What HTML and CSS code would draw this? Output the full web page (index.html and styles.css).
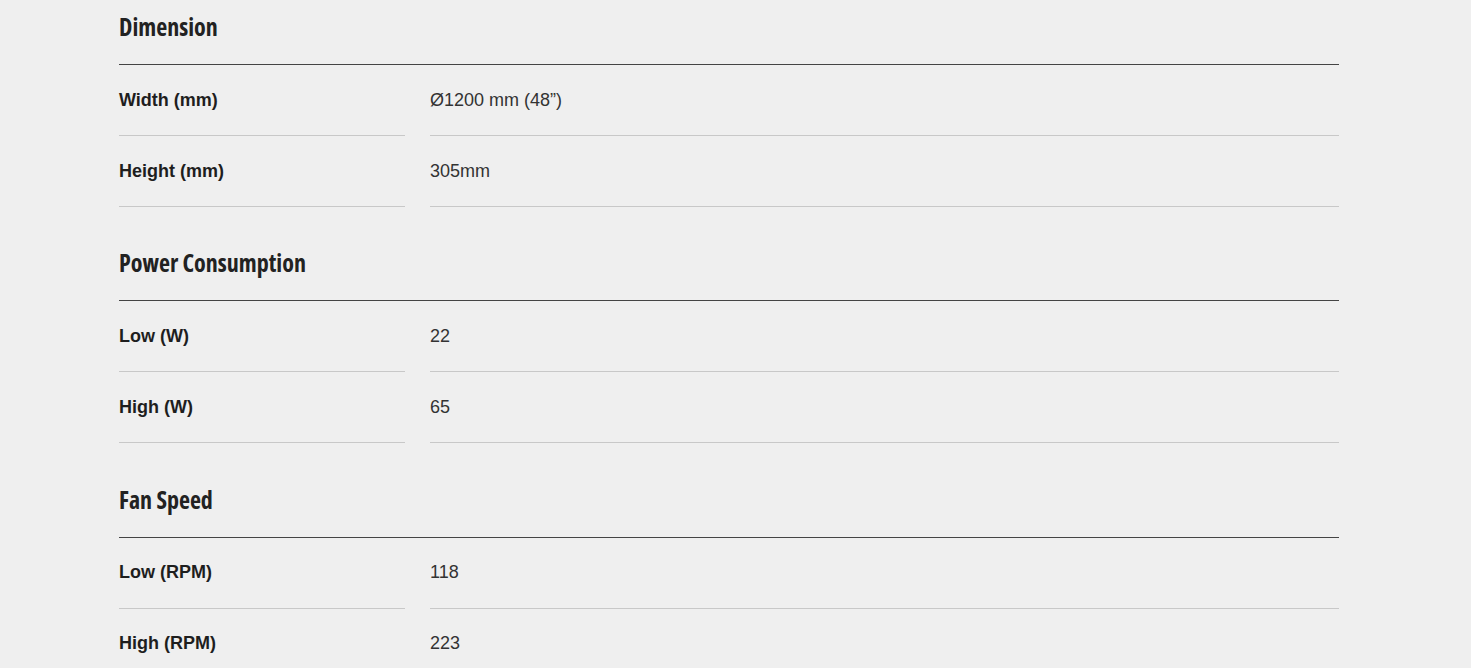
FILE: index.html
```html
<!DOCTYPE html>
<html lang="en">
<head>
<meta charset="utf-8">
<title>Specifications</title>
<link rel="stylesheet" href="styles.css">
</head>
<body>
<main class="specs">
  <section class="spec-group">
    <h2 class="spec-title">Dimension</h2>
    <div class="spec-rows">
      <div class="spec-label">Width (mm)</div><div class="spec-value">Ø1200 mm (48”)</div>
      <div class="spec-label">Height (mm)</div><div class="spec-value">305mm</div>
    </div>
  </section>
  <section class="spec-group">
    <h2 class="spec-title">Power Consumption</h2>
    <div class="spec-rows">
      <div class="spec-label">Low (W)</div><div class="spec-value">22</div>
      <div class="spec-label">High (W)</div><div class="spec-value">65</div>
    </div>
  </section>
  <section class="spec-group">
    <h2 class="spec-title">Fan Speed</h2>
    <div class="spec-rows">
      <div class="spec-label">Low (RPM)</div><div class="spec-value">118</div>
      <div class="spec-label">High (RPM)</div><div class="spec-value">223</div>
    </div>
  </section>
</main>
</body>
</html>
```
FILE: styles.css
```css
html, body {
  margin: 0;
  padding: 0;
  background: #efefef;
}
body {
  font-family: "Liberation Sans", Arial, sans-serif;
  color: #222;
}
.specs {
  padding: 12px 132px 0 119px;
  display: flex;
  flex-direction: column;
  gap: 41.4px;
}
.spec-title {
  margin: 0;
  font-family: "Open Sans", "Liberation Sans", sans-serif;
  font-stretch: 78%;
  font-weight: 700;
  font-size: 24px;
  line-height: 30px;
  color: #222;
  padding-bottom: 22px;
  border-bottom: 1px solid #444;
}
.spec-rows {
  display: grid;
  grid-template-columns: 286px 1fr;
  column-gap: 25px;
}
.spec-label,
.spec-value {
  height: 70px;
  display: flex;
  align-items: center;
  font-size: 18px;
  border-bottom: 1px solid #c8c8c8;
}
.spec-label {
  font-weight: 700;
  color: #1e1e1e;
}
.spec-value {
  color: #333;
}
```
